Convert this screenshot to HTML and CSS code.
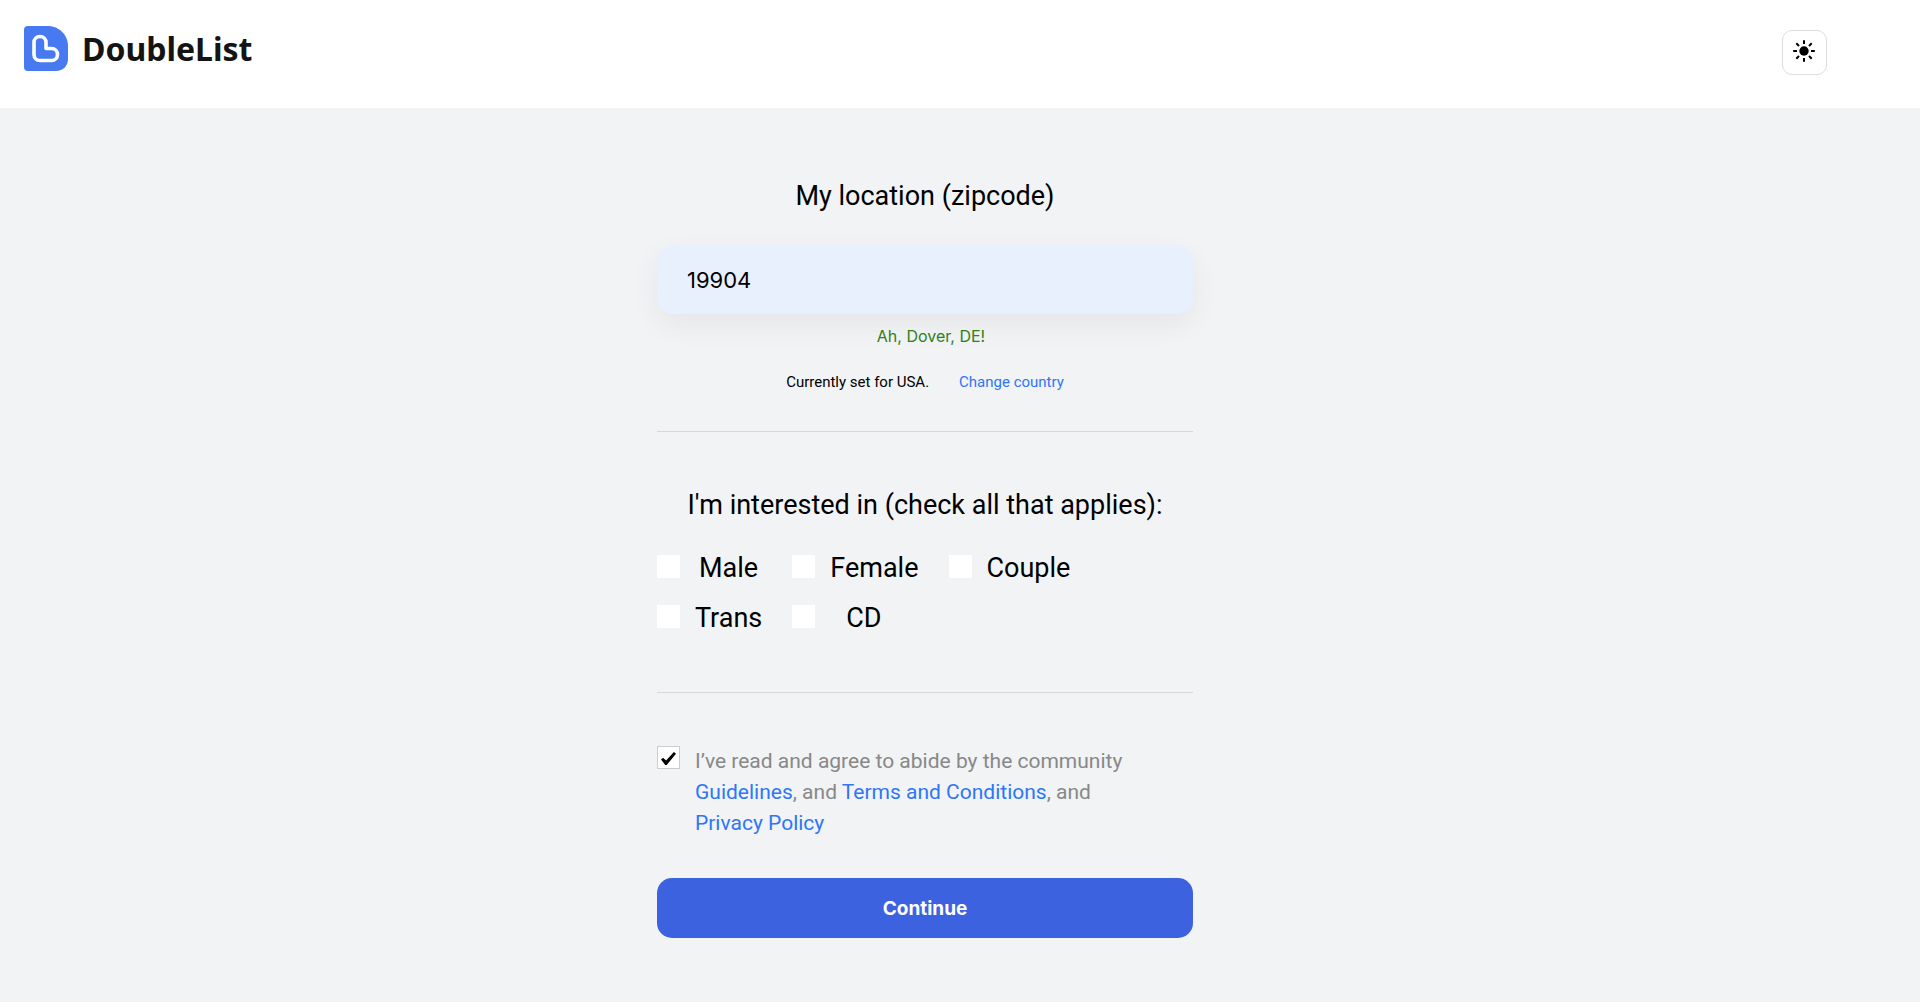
FILE: index.html
```html
<!DOCTYPE html>
<html lang="en">
<head>
<meta charset="utf-8">
<meta name="viewport" content="width=device-width, initial-scale=1">
<title>DoubleList</title>
<link rel="stylesheet" href="styles.css">
</head>
<body>
<header class="header">
  <a class="logo" href="#">
    <svg class="logo-mark" viewBox="0 0 44 45" aria-hidden="true">
      <path fill="#4779f0" d="M4 0H24C35 0 44 9 44 20V33C44 40 39 45 32 45H4Q0 45 0 41V4Q0 0 4 0Z"/>
      <path fill="none" stroke="#fff" stroke-width="3.6" stroke-linejoin="round" d="M10 16.500C10 13 12.500 10.500 16 10.500S22 13 22 16.500V22.500H27.500C31 22.500 33.500 25 33.500 28.500S31 34.500 27.500 34.500H16C12.500 34.500 10 32 10 28.500Z"/>
    </svg>
    <span class="logo-text">DoubleList</span>
  </a>
  <button class="theme" type="button" aria-label="Switch theme">
    <svg class="sun" viewBox="0 0 24 24" aria-hidden="true">
      <circle cx="12" cy="12" r="4.700"/>
      <path stroke="#000" stroke-width="2" d="M12 1.200V5M12 19V22.800M1.200 12H5M19 12H22.800M4.300 4.300L7 7M17 17L19.700 19.700M4.300 19.700L7 17M17 7L19.700 4.300"/>
    </svg>
  </button>
</header>
<main class="main">
  <form class="form">
    <section class="section">
      <label class="title" for="zip">My location (zipcode)</label>
      <input class="zip" id="zip" type="text" value="19904">
      <p class="found">Ah, Dover, DE!</p>
      <p class="country"><span>Currently set for USA.</span><a href="#">Change country</a></p>
    </section>
    <fieldset class="section interests">
      <legend class="title interests-title">I'm interested in (check all that applies):</legend>
      <div class="options">
        <label class="option"><input class="box" type="checkbox"><span class="option-name">Male</span></label>
        <label class="option"><input class="box" type="checkbox"><span class="option-name">Female</span></label>
        <label class="option"><input class="box" type="checkbox"><span class="option-name">Couple</span></label>
        <label class="option"><input class="box" type="checkbox"><span class="option-name">Trans</span></label>
        <label class="option"><input class="box" type="checkbox"><span class="option-name">CD</span></label>
      </div>
    </fieldset>
    <div class="agree">
      <input class="box box-agree" id="agree" type="checkbox" checked>
      <label class="agree-text" for="agree">I’ve read and agree to abide by the community <a href="#">Guidelines</a>, and <a href="#">Terms and Conditions</a>, and <a href="#">Privacy Policy</a></label>
    </div>
    <button class="continue" type="submit">Continue</button>
  </form>
</main>
</body>
</html>
```
FILE: styles.css
```css
* { box-sizing: border-box; }

body {
  margin: 0;
  min-height: 100vh;
  background: #f1f3f5;
  color: #000;
  font-family: Roboto, sans-serif;
}

a { color: #2f76f6; text-decoration: none; }

.header {
  display: flex;
  justify-content: space-between;
  align-items: flex-start;
  height: 108px;
  padding: 26px 93px 0 24px;
  background: #fff;
}

.logo {
  display: flex;
  align-items: center;
  gap: 14px;
  color: #141414;
}

.logo-mark { width: 44px; height: 45px; }

.logo-text {
  font: 700 32px/45px "Noto Sans", sans-serif;
}

.theme {
  width: 45px;
  height: 45px;
  margin-top: 4px;
  padding: 0 2px 3px 0;
  border: 1px solid #ddd;
  border-radius: 10px;
  background: #fff;
}

.sun { display: block; width: 24px; height: 24px; margin: 0 auto; }

/* The column is centred in the space left of a 70px gutter */
.main { padding: 71px 70px 64px 0; }

.form { width: 100%; max-width: 536px; margin: 0 auto; }

.section {
  border: 0;
  border-bottom: 1px solid #d6d9db;
  margin: 0;
  padding: 0;
}

.title {
  display: block;
  width: 100%;
  padding: 0;
  font-size: 27px;
  line-height: 34px;
  text-align: center;
}

.zip {
  display: block;
  width: 100%;
  height: 68px;
  margin-top: 33px;
  padding: 0 30px;
  border: 0;
  border-radius: 15px;
  background: #e8effd;
  box-shadow: 0 10px 30px rgba(0, 0, 0, .06);
  font: 22px Inter, sans-serif;
}

.found {
  margin: 12px 0 0;
  padding-left: 12px;
  color: #2f8019;
  font: 16px/20px Inter, sans-serif;
  text-align: center;
}

.country {
  display: flex;
  justify-content: center;
  gap: 30px;
  margin: 26px 0 39px;
  font-size: 15px;
  line-height: 20px;
}

.interests { padding-bottom: 57px; }

.interests-title { padding-top: 56px; }

.options {
  display: grid;
  grid-template-columns: repeat(3, max-content);
  gap: 16px 30px;
  margin-top: 29px;
}

.option {
  display: flex;
  align-items: center;
  gap: 15px;
  font-size: 27px;
  line-height: 34px;
}

.option .box { margin-bottom: 3px; }

.option-name { min-width: 67px; text-align: center; }

.box {
  flex: none;
  appearance: none;
  width: 23px;
  height: 23px;
  margin: 0;
  background: #fff;
}

.box-agree {
  display: grid;
  place-items: center;
  border: 1px solid #ccc;
}

.box-agree:checked::before {
  content: "";
  width: 15px;
  height: 13px;
  margin-top: 2px;
  background: #000;
  clip-path: polygon(0 58%, 14% 45%, 34% 65%, 86% 0, 100% 14%, 38% 100%, 28% 100%);
}

.agree {
  display: flex;
  gap: 15px;
  margin-top: 53px;
}

.agree-text {
  max-width: 440px;
  color: #888;
  font-size: 21px;
  line-height: 31px;
}

.continue {
  display: block;
  width: 100%;
  height: 60px;
  margin-top: 39px;
  padding: 0;
  border: 0;
  border-radius: 15px;
  background: #3c62df;
  color: #fff;
  font: 700 19px Inter, sans-serif;
}
```
